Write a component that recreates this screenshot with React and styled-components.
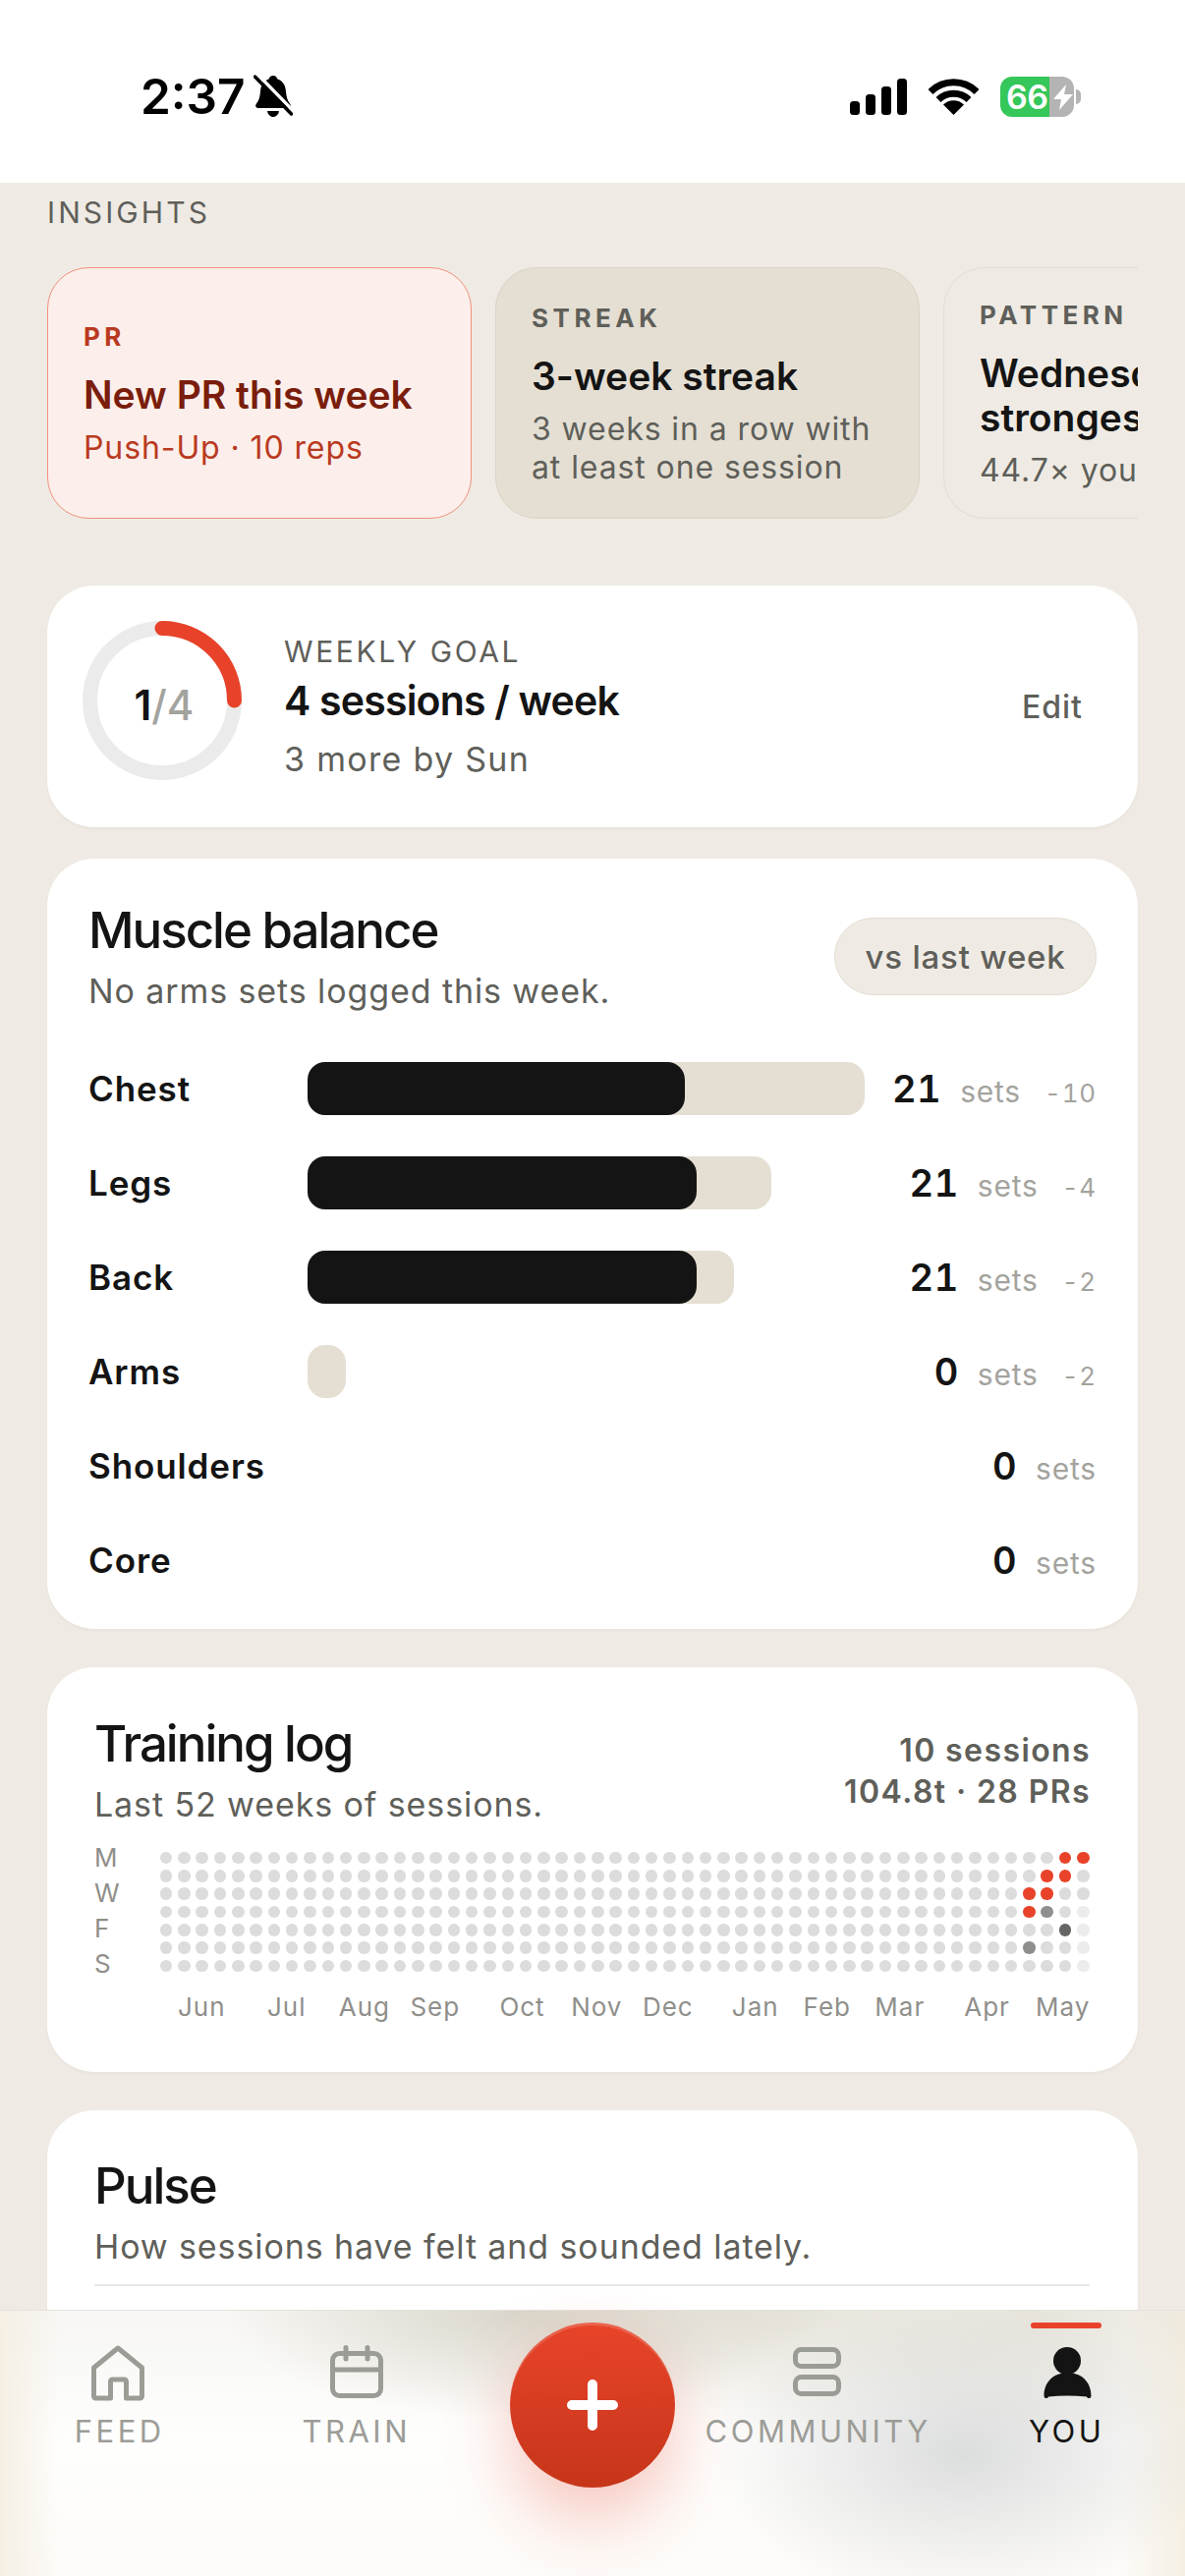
import React from 'react';
import styled, { createGlobalStyle } from 'styled-components';

const GlobalStyle = createGlobalStyle`
  html, body {
    margin: 0;
    padding: 0;
    background: #efebe4;
  }
  * {
    box-sizing: border-box;
  }
`;

const Page = styled.div`
  position: relative;
  width: 1206px;
  height: 2622px;
  overflow: hidden;
  background: #efebe4;
  color: #141414;
  font-family: Inter, 'Liberation Sans', sans-serif;
`;

const StatusBar = styled.div`
  height: 186px;
  padding: 10px 106px 0 143px;
  background: #fff;
  display: flex;
  align-items: center;
  justify-content: space-between;
`;

const StatusSide = styled.div`
  display: flex;
  align-items: center;
  gap: ${(p) => p.$gap}px;
`;

const Time = styled.span`
  font-size: 49.5px;
  font-weight: 600;
  line-height: 60px;
  color: #000;
`;

const Battery = styled.div`
  position: relative;
  width: 75px;
  height: 41px;
  border-radius: 12px;
  background: linear-gradient(90deg, #35c759 0 50px, #b4b4b4 50px);
  color: #fff;
  font-size: 34px;
  font-weight: 600;
  line-height: 41px;
  letter-spacing: -0.5px;
  padding-left: 6px;
  margin-right: 7px;
  display: flex;

  &::after {
    content: '';
    position: absolute;
    right: -7px;
    top: 13px;
    width: 5px;
    height: 15px;
    border-radius: 0 5px 5px 0;
    background: #b4b4b4;
  }
`;

const BoltIcon = styled.svg`
  position: absolute;
  left: 52px;
  top: 8px;
`;

const Content = styled.main`
  padding: 0 48px;
`;

const SectionLabel = styled.div`
  padding-top: 13px;
  font-size: 30px;
  line-height: 34px;
  letter-spacing: 3.1px;
  color: #5f5f5a;
`;

const InsightRow = styled.div`
  margin-top: 39px;
  width: 1110px;
  display: flex;
  gap: 24px;
  overflow: hidden;
`;

const InsightCard = styled.div`
  flex: 0 0 432px;
  height: 256px;
  border-radius: 42px;
  border: 1.5px solid ${(p) => p.$border};
  background: ${(p) => p.$bg};
  padding: 3px 36px 0;
  display: flex;
  flex-direction: column;
  justify-content: center;
  white-space: nowrap;
`;

const InsightKicker = styled.div`
  font-size: 26px;
  font-weight: 700;
  line-height: 30px;
  letter-spacing: 4.5px;
  color: ${(p) => p.$color};
`;

const InsightTitle = styled.div`
  margin-top: 21px;
  font-size: 39px;
  font-weight: 600;
  line-height: 45px;
  color: ${(p) => p.$color};
`;

const InsightText = styled.div`
  margin-top: 12px;
  font-size: 32px;
  line-height: 39px;
  letter-spacing: 0.9px;
  color: ${(p) => p.$color};
`;

const Card = styled.section`
  margin-top: ${(p) => p.$top}px;
  background: #fff;
  border-radius: 48px;
  box-shadow: 0 2px 3px rgba(60, 50, 30, 0.04);
`;

const GoalCard = styled(Card)`
  height: 246px;
  display: flex;
  align-items: flex-start;
  padding: 36px 56px 48px 36px;
`;

const RingWrap = styled.div`
  position: relative;
  width: 162px;
  height: 162px;
  flex: none;
`;

const RingText = styled.div`
  position: absolute;
  inset: 0;
  display: flex;
  align-items: center;
  justify-content: center;
  padding: 9px 0 0 4px;
  font-size: 42px;
  font-weight: 600;
  line-height: 50px;
`;

const RingMuted = styled.span`
  color: #a3a39e;
  font-weight: 500;
`;

const GoalBody = styled.div`
  flex: 1;
  margin-left: 43px;
`;

const GoalKicker = styled.div`
  margin-top: 14px;
  font-size: 30px;
  line-height: 34px;
  letter-spacing: 2.6px;
  color: #5f5f5a;
`;

const GoalTitle = styled.div`
  margin-top: 5px;
  font-size: 41px;
  font-weight: 600;
  line-height: 56px;
  letter-spacing: -0.8px;
`;

const GoalText = styled.div`
  margin-top: 8px;
  font-size: 34px;
  line-height: 48px;
  letter-spacing: 1.3px;
  color: #5f5f5a;
`;

const EditLink = styled.div`
  align-self: center;
  margin-top: 12px;
  font-size: 32px;
  font-weight: 500;
  letter-spacing: 1px;
  color: #5f5f5a;
`;

const BalanceCard = styled(Card)`
  padding: 40px 42px 22px 42px;
`;

const BalanceHead = styled.div`
  height: 146px;
  display: flex;
  justify-content: space-between;
  align-items: flex-start;
`;

const CardTitle = styled.h2`
  margin: 0;
  font-size: 51px;
  font-weight: 500;
  line-height: 66px;
  letter-spacing: -2px;
`;

const CardText = styled.p`
  margin: 6px 0 0;
  font-size: 34px;
  line-height: 46px;
  letter-spacing: 0.9px;
  color: #5f5f5a;
`;

const Pill = styled.div`
  margin-top: 20px;
  width: 267px;
  height: 79px;
  border-radius: 40px;
  border: 1.5px solid #e2ddd0;
  background: #efebe4;
  display: flex;
  align-items: center;
  justify-content: center;
  font-size: 33px;
  font-weight: 500;
  letter-spacing: 0.8px;
  color: #5f5f5a;
`;

const MuscleRow = styled.div`
  height: 96px;
  display: grid;
  grid-template-columns: 223px 1fr auto;
  align-items: center;
`;

const MuscleName = styled.div`
  font-size: 35px;
  font-weight: 600;
  letter-spacing: 0.9px;
`;

const Track = styled.div`
  height: 54px;
  width: ${(p) => p.$width}px;
  border-radius: 18px;
  background: #e5dfd3;
`;

const Fill = styled.div`
  height: 54px;
  width: ${(p) => p.$width}px;
  border-radius: 18px;
  background: #141414;
`;

const StatLine = styled.div`
  display: flex;
  align-items: baseline;
  justify-content: flex-end;
`;

const StatValue = styled.span`
  font-size: 38px;
  font-weight: 600;
  letter-spacing: 0.5px;
  font-variant-numeric: tabular-nums;
`;

const StatUnit = styled.span`
  margin-left: 19px;
  font-size: 30px;
  letter-spacing: 0.8px;
  color: #a3a39e;
`;

const StatDelta = styled.span`
  margin-left: 24px;
  font-size: 26px;
  letter-spacing: 0.8px;
  font-variant-numeric: tabular-nums;
  color: #a3a39e;
`;

const LogCard = styled(Card)`
  height: 412px;
  padding: 45px 48px 0 48px;
`;

const LogHead = styled.div`
  height: 131px;
  display: flex;
  justify-content: space-between;
`;

const LogTotals = styled.div`
  padding-top: 19px;
  text-align: right;
  font-size: 32px;
  font-weight: 600;
  line-height: 42px;
  letter-spacing: 1.4px;
  color: #5f5f5a;
`;

const HeatWrap = styled.div`
  display: flex;
`;

const DayColumn = styled.div`
  width: 64px;
  flex: none;
`;

const DayLabel = styled.div`
  height: 36px;
  line-height: 36px;
  font-size: 26px;
  color: #8f8f8b;
`;

const HeatGrid = styled.div`
  margin-top: 9px;
  display: grid;
  grid-auto-flow: column;
  grid-template-rows: repeat(7, 18.31px);
  grid-template-columns: repeat(52, 18.31px);
`;

const Dot = styled.span`
  align-self: center;
  justify-self: center;
  width: 12.5px;
  height: 12.5px;
  border-radius: 50%;
  background: ${(p) => p.$color};
`;

const MonthRow = styled.div`
  margin-top: 8px;
  padding-left: 85px;
  display: grid;
  grid-template-columns: repeat(52, 18.2px);
`;

const Month = styled.span`
  grid-column: span ${(p) => p.$span};
  font-size: 26px;
  line-height: 36px;
  letter-spacing: 1px;
  color: #8f8f8b;
  white-space: nowrap;
`;

const PulseCard = styled(Card)`
  height: 320px;
  padding: 44px 49px 0 48px;
`;

const PulseDivider = styled.div`
  margin-top: 15px;
  height: 2px;
  background: #e8e8e6;
`;

const TabBar = styled.nav`
  position: absolute;
  left: 0;
  right: 0;
  bottom: 0;
  height: 271px;
  border-top: 1.5px solid #e4e2dd;
  display: grid;
  grid-template-columns: 240px 242px 218px 262px 244px;
  align-items: start;
  background:
    radial-gradient(260px 150px at 980px 145px, rgba(208, 210, 210, 0.75), rgba(208, 210, 210, 0)),
    radial-gradient(300px 110px at 530px 0, rgba(205, 200, 185, 0.7), rgba(205, 200, 185, 0)),
    radial-gradient(260px 120px at 800px 0, rgba(215, 210, 195, 0.55), rgba(215, 210, 195, 0)),
    radial-gradient(220px 130px at 1060px 10px, rgba(215, 210, 195, 0.5), rgba(215, 210, 195, 0)),
    linear-gradient(90deg, #f5efe3 0, rgba(255, 255, 255, 0) 60px, rgba(255, 255, 255, 0) 1140px, #f5efe3 1206px),
    linear-gradient(180deg, #f7f6f3 0, #fefefd 50%, #fdfbf8 100%);
`;

const Tab = styled.div`
  position: relative;
  padding-top: 31px;
  display: flex;
  flex-direction: column;
  align-items: center;
  color: ${(p) => (p.$active ? '#141414' : '#9c9c97')};
`;

const TabIcon = styled.svg`
  width: 64px;
  height: 64px;
  display: block;
`;

const TabLabel = styled.span`
  margin-top: 10px;
  font-size: 31px;
  line-height: 36px;
  letter-spacing: 3.5px;
  margin-right: -3.5px;
`;

const TabMarker = styled.span`
  position: absolute;
  top: 12px;
  left: 50%;
  margin-left: -35px;
  width: 72px;
  height: 6px;
  border-radius: 3px;
  background: #e8432a;
`;

const AddButton = styled.div`
  margin: 12px 0 0 37px;
  width: 168px;
  height: 168px;
  border-radius: 50%;
  background: linear-gradient(180deg, #e8442a 0%, #c63519 100%);
  box-shadow:
    inset 0 3px 0 rgba(255, 255, 255, 0.16),
    0 30px 70px rgba(232, 67, 42, 0.3);
  display: flex;
  align-items: center;
  justify-content: center;
`;

const INSIGHTS = [
  {
    kicker: 'PR',
    title: ['New PR this week'],
    text: ['Push-Up · 10 reps'],
    bg: '#fcefeb',
    border: '#f0907c',
    kickerColor: '#b93a21',
    titleColor: '#7a1d0c',
    textColor: '#b93a21',
  },
  {
    kicker: 'STREAK',
    title: ['3-week streak'],
    text: ['3 weeks in a row with', 'at least one session'],
    bg: '#e5dfd3',
    border: '#d9d4c5',
    kickerColor: '#5f5f5a',
    titleColor: '#141414',
    textColor: '#5f5f5a',
  },
  {
    kicker: 'PATTERN',
    title: ['Wednesdays are your', 'strongest day'],
    text: ['44.7× your average'],
    bg: '#efebe4',
    border: '#e2ddd0',
    kickerColor: '#5f5f5a',
    titleColor: '#141414',
    textColor: '#5f5f5a',
  },
];

const MUSCLES = [
  { name: 'Chest', track: 567, fill: 384, sets: 21, delta: '-10' },
  { name: 'Legs', track: 472, fill: 396, sets: 21, delta: '-4' },
  { name: 'Back', track: 434, fill: 396, sets: 21, delta: '-2' },
  { name: 'Arms', track: 39, fill: 0, sets: 0, delta: '-2' },
  { name: 'Shoulders', track: 0, fill: 0, sets: 0 },
  { name: 'Core', track: 0, fill: 0, sets: 0 },
];

const MONTHS = [
  ['Jun', 5], ['Jul', 4], ['Aug', 4], ['Sep', 5], ['Oct', 4], ['Nov', 4],
  ['Dec', 5], ['Jan', 4], ['Feb', 4], ['Mar', 5], ['Apr', 4], ['May', 4],
];

const RED = '#e8432a';
const MARKED = {
  '50-0': RED, '51-0': RED,
  '49-1': RED, '50-1': RED,
  '48-2': RED, '49-2': RED,
  '48-3': RED, '49-3': '#8f8f8d',
  '50-4': '#666664',
  '48-5': '#8f8f8d',
};

const dotColor = (col, row) => {
  const key = `${col}-${row}`;
  if (MARKED[key]) return MARKED[key];
  if (col === 51 && row > 2) return '#ececec';
  return '#dcdcdc';
};

const HEAT_CELLS = [];
for (let col = 0; col < 52; col += 1) {
  for (let row = 0; row < 7; row += 1) {
    HEAT_CELLS.push({ key: `${col}-${row}`, color: dotColor(col, row) });
  }
}

const MuteBell = () => (
  <svg width="40" height="44" viewBox="0 0 40 44">
    <path
      d="M20 1c2.5 0 4 1.6 4.4 3.6C30 6.4 32.5 11 33 17c.4 5 1.2 9 4 12.5 1.6 2 .8 4.5-2 4.5H5c-2.8 0-3.6-2.5-2-4.5C5.8 26 6.6 22 7 17c.5-6 3-10.6 8.6-12.4C16 2.6 17.5 1 20 1z"
      fill="#000"
    />
    <path d="M14 37h12c-.6 3.6-3 6-6 6s-5.400-2.400-6-6z" fill="#000" />
    <path d="M4.500 0l36 37" stroke="#fff" strokeWidth="3.500" />
    <path d="M1.500 2l37 38" stroke="#000" strokeWidth="3.500" strokeLinecap="round" />
  </svg>
);

const Signal = () => (
  <svg width="58" height="37" viewBox="0 0 58 37">
    <rect x="0" y="23" width="10" height="14" rx="3.5" fill="#000" />
    <rect x="16" y="16" width="10" height="21" rx="3.5" fill="#000" />
    <rect x="32" y="8" width="10" height="29" rx="3.5" fill="#000" />
    <rect x="48" y="0" width="10" height="37" rx="3.5" fill="#000" />
  </svg>
);

const Wifi = () => (
  <svg width="51" height="37" viewBox="0 0 51 37" fill="none">
    <path d="M2 13.5a33.5 33.5 0 0 1 47 0" stroke="#000" strokeWidth="7" />
    <path d="M10 21.5a22.5 22.5 0 0 1 31 0" stroke="#000" strokeWidth="7" />
    <path d="M25.5 37L15 26.5a15 15 0 0 1 21 0z" fill="#000" />
  </svg>
);

const Ring = () => (
  <svg width="162" height="162" viewBox="0 0 162 162" fill="none">
    <circle cx="81" cy="81" r="73.5" stroke="#ebebeb" strokeWidth="15" />
    <path
      d="M81 7.5A73.5 73.5 0 0 1 154.5 81"
      stroke="#e8432a"
      strokeWidth="15"
      strokeLinecap="round"
    />
  </svg>
);

const HomeIcon = () => (
  <TabIcon viewBox="0 0 64 64" fill="none" stroke="currentColor" strokeWidth="5" strokeLinejoin="round">
    <path d="M7.5 27L32 7l24.5 20v29a2 2 0 0 1-2 2H40.5V41a2 2 0 0 0-2-2h-12a2 2 0 0 0-2 2v17H9.5a2 2 0 0 1-2-2z" />
  </TabIcon>
);

const CalendarIcon = () => (
  <TabIcon viewBox="0 0 64 64" fill="none" stroke="currentColor" strokeWidth="5" strokeLinecap="round">
    <rect x="9.5" y="12.5" width="49" height="43" rx="7" />
    <path d="M9.5 29h49M23 6.5V18M45 6.5V18" />
  </TabIcon>
);

const StackIcon = () => (
  <TabIcon viewBox="0 0 64 64" fill="none" stroke="currentColor" strokeWidth="5">
    <rect x="10.5" y="8.5" width="44" height="17" rx="6" />
    <rect x="10.5" y="36.5" width="44" height="17" rx="6" />
  </TabIcon>
);

const PersonIcon = () => (
  <TabIcon viewBox="0 0 64 64" fill="currentColor">
    <circle cx="34" cy="20" r="14" />
    <path d="M10.5 55.5C10.5 41 21 32 34.5 32S58.5 41 58.5 55.5c0 3-3.5 3.5-4.5 1Q34 54.5 15 56.5c-1 2.5-4.5 2-4.5-1z" />
  </TabIcon>
);

export default function App() {
  return (
    <>
      <GlobalStyle />
      <Page>
        <StatusBar>
          <StatusSide $gap={8}>
            <Time>2:37</Time>
            <MuteBell />
          </StatusSide>
          <StatusSide $gap={22}>
            <Signal />
            <Wifi />
            <Battery>
              66
              <BoltIcon width="24" height="26" viewBox="0 0 24 26">
                <path d="M15 0L2 15h8l-2 11L22 10h-9z" fill="#fff" />
              </BoltIcon>
            </Battery>
          </StatusSide>
        </StatusBar>

        <Content>
          <SectionLabel>INSIGHTS</SectionLabel>
          <InsightRow>
            {INSIGHTS.map((item) => (
              <InsightCard key={item.kicker} $bg={item.bg} $border={item.border}>
                <InsightKicker $color={item.kickerColor}>{item.kicker}</InsightKicker>
                <InsightTitle $color={item.titleColor}>
                  {item.title.map((line) => (
                    <div key={line}>{line}</div>
                  ))}
                </InsightTitle>
                <InsightText $color={item.textColor}>
                  {item.text.map((line) => (
                    <div key={line}>{line}</div>
                  ))}
                </InsightText>
              </InsightCard>
            ))}
          </InsightRow>

          <GoalCard $top={68}>
            <RingWrap>
              <Ring />
              <RingText>
                1<RingMuted>/4</RingMuted>
              </RingText>
            </RingWrap>
            <GoalBody>
              <GoalKicker>WEEKLY GOAL</GoalKicker>
              <GoalTitle>4 sessions / week</GoalTitle>
              <GoalText>3 more by Sun</GoalText>
            </GoalBody>
            <EditLink>Edit</EditLink>
          </GoalCard>

          <BalanceCard $top={32}>
            <BalanceHead>
              <div>
                <CardTitle>Muscle balance</CardTitle>
                <CardText>No arms sets logged this week.</CardText>
              </div>
              <Pill>vs last week</Pill>
            </BalanceHead>
            {MUSCLES.map((muscle) => (
              <MuscleRow key={muscle.name}>
                <MuscleName>{muscle.name}</MuscleName>
                <div>
                  {muscle.track > 0 && (
                    <Track $width={muscle.track}>
                      {muscle.fill > 0 && <Fill $width={muscle.fill} />}
                    </Track>
                  )}
                </div>
                <StatLine>
                  <StatValue>{muscle.sets}</StatValue>
                  <StatUnit>sets</StatUnit>
                  {muscle.delta && <StatDelta>{muscle.delta}</StatDelta>}
                </StatLine>
              </MuscleRow>
            ))}
          </BalanceCard>

          <LogCard $top={39}>
            <LogHead>
              <div>
                <CardTitle>Training log</CardTitle>
                <CardText>Last 52 weeks of sessions.</CardText>
              </div>
              <LogTotals>
                <div>10 sessions</div>
                <div>104.8t · 28 PRs</div>
              </LogTotals>
            </LogHead>
            <HeatWrap>
              <DayColumn>
                {['M', 'W', 'F', 'S'].map((day, i) => (
                  <DayLabel key={`${day}${i}`}>{day}</DayLabel>
                ))}
              </DayColumn>
              <HeatGrid>
                {HEAT_CELLS.map((cell) => (
                  <Dot key={cell.key} $color={cell.color} />
                ))}
              </HeatGrid>
            </HeatWrap>
            <MonthRow>
              {MONTHS.map(([label, span]) => (
                <Month key={label} $span={span}>
                  {label}
                </Month>
              ))}
            </MonthRow>
          </LogCard>

          <PulseCard $top={39}>
            <CardTitle>Pulse</CardTitle>
            <CardText>How sessions have felt and sounded lately.</CardText>
            <PulseDivider />
          </PulseCard>
        </Content>

        <TabBar>
          <Tab>
            <HomeIcon />
            <TabLabel>FEED</TabLabel>
          </Tab>
          <Tab>
            <CalendarIcon />
            <TabLabel>TRAIN</TabLabel>
          </Tab>
          <AddButton>
            <svg width="52" height="52" viewBox="0 0 52 52">
              <path d="M26 5v42M5 26h42" stroke="#fff" strokeWidth="10" strokeLinecap="round" />
            </svg>
          </AddButton>
          <Tab>
            <StackIcon />
            <TabLabel>COMMUNITY</TabLabel>
          </Tab>
          <Tab $active>
            <TabMarker />
            <PersonIcon />
            <TabLabel>YOU</TabLabel>
          </Tab>
        </TabBar>
      </Page>
    </>
  );
}
